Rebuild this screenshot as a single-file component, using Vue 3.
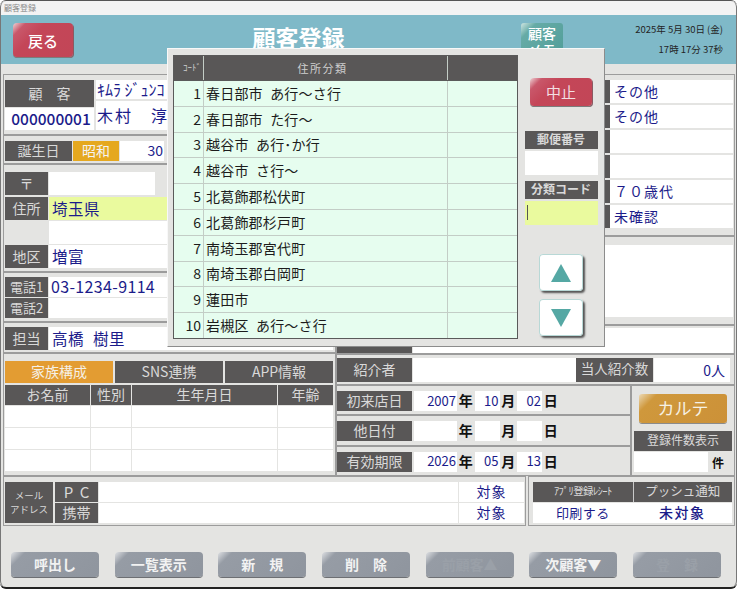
<script setup>
const groups = [
  { l: '家族構成', on: true },
  { l: 'SNS連携', on: false },
  { l: 'APP情報', on: false }
]
const famRows = [1, 2, 3]
const rightRows = ['その他', 'その他', '', '', '７０歳代', '未確認']
const dates = [
  { l: '初来店日', y: '2007', m: '10', d: '02' },
  { l: '他日付', y: '', m: '', d: '' },
  { l: '有効期限', y: '2026', m: '05', d: '13' }
]
const footer = [
  { l: '呼出し' },
  { l: '一覧表示' },
  { l: '新　規' },
  { l: '削　除' },
  { l: '前顧客▲', off: true },
  { l: '次顧客▼' },
  { l: '登　録', off: true }
]
const areas = [
  '春日部市 あ行～さ行',
  '春日部市 た行～',
  '越谷市 あ行･か行',
  '越谷市 さ行～',
  '北葛飾郡松伏町',
  '北葛飾郡杉戸町',
  '南埼玉郡宮代町',
  '南埼玉郡白岡町',
  '蓮田市',
  '岩槻区 あ行～さ行'
]
</script>

<template>
  <div class="window">
    <div class="titlebar">顧客登録</div>
    <header class="header">
      <button class="btn-red back">戻る</button>
      <h1 class="title">顧客登録</h1>
      <button class="memo">顧客<br />メモ</button>
      <div class="clock">
        <div>2025年 5月 30日 (金)</div>
        <div>17時 17分 37秒</div>
      </div>
    </header>

    <div class="gap-band"></div>

    <main class="upper">
      <div class="col-left">
        <section class="panel p-customer">
          <div class="cust-left">
            <div class="label cust-label">顧　客</div>
            <div class="value cust-id">000000001</div>
          </div>
          <div class="cust-right">
            <div class="value cust-kana">ｷﾑﾗ ｼﾞｭﾝｺ</div>
            <div class="value cust-name">木村　淳子</div>
          </div>
        </section>

        <section class="panel p-birth">
          <div class="label birth-label">誕生日</div>
          <div class="era">昭和</div>
          <div class="value birth-year">30</div>
        </section>

        <section class="panel p-address">
          <div class="addr-line r1">
            <div class="label addr-label">〒</div>
            <div class="value zip"></div>
          </div>
          <div class="addr-line r2">
            <div class="label addr-label">住所</div>
            <div class="value yellow addr-text">埼玉県</div>
          </div>
          <div class="addr-line r3">
            <div class="addr-spacer"></div>
            <div class="value addr-text"></div>
          </div>
          <div class="addr-line r4">
            <div class="label addr-label">地区</div>
            <div class="value addr-text">増富</div>
          </div>
        </section>

        <section class="panel p-phone">
          <div class="phone-line">
            <div class="label addr-label tel">電話1</div>
            <div class="value tel-no">03-1234-9114</div>
          </div>
          <div class="phone-line">
            <div class="label addr-label tel">電話2</div>
            <div class="value tel-no"></div>
          </div>
        </section>

        <section class="panel p-staff">
          <div class="label addr-label">担当</div>
          <div class="value addr-text staff-name">高橋 樹里</div>
          <div class="staff-btn"></div>
        </section>

        <section class="panel p-family">
          <nav class="tabs">
            <div v-for="g in groups" :key="g.l" class="tab" :class="{ on: g.on }">{{ g.l }}</div>
          </nav>
          <div class="fam-grid">
            <div class="label fam-h">お名前</div>
            <div class="label fam-h">性別</div>
            <div class="label fam-h">生年月日</div>
            <div class="label fam-h">年齢</div>
            <template v-for="r in famRows" :key="r">
              <div class="value"></div>
              <div class="value"></div>
              <div class="value"></div>
              <div class="value"></div>
            </template>
          </div>
        </section>
      </div>

      <div class="col-right">
        <section class="panel p-right-top">
          <div v-for="(v, i) in rightRows" :key="i" class="rt-line">
            <div class="label rt-label"></div>
            <div class="value rt-val">{{ v }}</div>
          </div>
        </section>
        <section class="panel p-note">
          <div class="value note-box"></div>
        </section>
        <section class="panel p-line">
          <div class="label line-label"></div>
          <div class="value line-val"></div>
        </section>
        <section class="panel p-intro">
          <div class="label intro-label">紹介者</div>
          <div class="value intro-val"></div>
          <div class="label intro-count">当人紹介数</div>
          <div class="value intro-num">0人</div>
        </section>
        <div class="dates-wrap">
          <div class="dates">
            <section v-for="d in dates" :key="d.l" class="panel date-line">
              <div class="label date-label">{{ d.l }}</div>
              <div class="value date-y">{{ d.y }}</div>
              <b class="unit">年</b>
              <div class="value date-md">{{ d.m }}</div>
              <b class="unit">月</b>
              <div class="value date-md">{{ d.d }}</div>
              <b class="unit">日</b>
            </section>
          </div>
          <section class="panel karte-box">
            <button class="karte">カルテ</button>
            <div class="label count-label">登録件数表示</div>
            <div class="count-line">
              <div class="value count-val"></div>
              <b class="count-unit">件</b>
            </div>
          </section>
        </div>
      </div>
    </main>

    <div class="mail-band">
      <section class="panel p-mail">
        <div class="label mail-head">メール<br />アドレス</div>
        <div class="mail-rows">
          <div class="mail-line">
            <div class="label mail-type pc">P C</div>
            <div class="value mail-addr"></div>
            <div class="value mail-flag">対象</div>
          </div>
          <div class="mail-line">
            <div class="label mail-type">携帯</div>
            <div class="value mail-addr"></div>
            <div class="value mail-flag">対象</div>
          </div>
        </div>
      </section>
      <section class="panel p-app">
        <div class="label app-h app-h1">ｱﾌﾟﾘ登録ﾚｼｰﾄ</div>
        <div class="label app-h">プッシュ通知</div>
        <div class="value app-v small">印刷する</div>
        <div class="value app-v">未対象</div>
      </section>
    </div>

    <footer class="footer">
      <button v-for="f in footer" :key="f.l" class="foot-btn" :class="{ off: f.off }">{{ f.l }}</button>
    </footer>

    <div class="modal">
      <div class="list">
        <div class="list-row list-head">
          <div class="c-code">ｺｰﾄﾞ</div>
          <div class="c-name">住所分類</div>
          <div class="c-blank"></div>
        </div>
        <div v-for="(a, i) in areas" :key="a" class="list-row">
          <div class="c-code">{{ i + 1 }}</div>
          <div class="c-name">{{ a }}</div>
          <div class="c-blank"></div>
        </div>
      </div>
      <aside class="side">
        <button class="btn-red stop">中止</button>
        <div class="label side-label first">郵便番号</div>
        <div class="value side-val"></div>
        <div class="label side-label">分類コード</div>
        <div class="value yellow side-val cursor"><span class="caret"></span></div>
        <button class="arrow up" aria-label="up"><svg width="20" height="18" viewBox="0 0 20 18"><path d="M10 0 L20 18 L0 18 Z" fill="#55a8a4" /></svg></button>
        <button class="arrow down" aria-label="down"><svg width="20" height="18" viewBox="0 0 20 18"><path d="M0 0 L20 0 L10 18 Z" fill="#55a8a4" /></svg></button>
      </aside>
    </div>
  </div>
</template>

<style>
html, body { margin: 0; background: #fff; }
</style>

<style scoped>
* { box-sizing: border-box; }
.window {
  position: relative;
  width: 737px;
  height: 589px;
  overflow: hidden;
  display: flex;
  flex-direction: column;
  background: #e4e4e2;
  border-top: 1px solid #555;
  border-bottom: 2px solid #222;
  border-radius: 6px;
  font-family: "Noto Sans CJK JP", "Noto Sans", sans-serif;
  color: #1b1b8a;
}
.window::after {
  content: "";
  position: absolute;
  inset: 0;
  border-left: 1px solid #777;
  border-right: 1px solid #777;
  border-radius: 6px;
  pointer-events: none;
}
.titlebar {
  height: 14px;
  flex: none;
  background: #f3f3f3;
  color: #8a8a8a;
  font-size: 8px;
  line-height: 14px;
  padding-left: 4px;
}
.header {
  height: 49px;
  flex: none;
  background: #7fb9c8;
  display: flex;
  align-items: flex-start;
  padding: 8px 14px 0 13px;
  position: relative;
}
.back { width: 60px; height: 34px; font-size: 15px; padding-bottom: 2px; }
.btn-red {
  border: 0;
  border-radius: 4px;
  background: linear-gradient(135deg, #efd3d6 0, #c9576a 14%, #c44658 35%, #c24657 100%);
  box-shadow: 0 1px 0 #7c7c7c, 1px 1px 0 #8a5a62;
  color: #fff;
  font-family: inherit;
  font-weight: 500;
  padding: 0;
}
.title {
  margin: -1px 0 0;
  width: 448px;
  padding-left: 3px;
  text-align: center;
  color: #fff;
  font-size: 23px;
  line-height: 30px;
  font-weight: 700;
}
.memo {
  width: 42px;
  height: 36px;
  border: 0;
  border-radius: 3px;
  background: linear-gradient(135deg, #cfe6e2 0, #66aba6 20%, #4f9d98 100%);
  color: #fff;
  font-family: inherit;
  font-size: 14px;
  line-height: 16px;
  font-weight: 500;
  padding: 0;
}
.clock {
  margin-left: auto;
  margin-top: -3px;
  color: #252525;
  font-size: 9.5px;
  text-align: right;
  line-height: 19.5px;
  display: flex;
  flex-direction: column;
}
.gap-band { height: 10px; flex: none; }

.panel { border: 1px solid #9c9c9c; }
.label {
  background: #595757;
  color: #d9d9d9;
  display: flex;
  align-items: center;
  justify-content: center;
  font-size: 14px;
  line-height: 1;
  padding-bottom: 2px;
}
.value {
  background: #fff;
  color: #1b1b8a;
  font-size: 14px;
  display: flex;
  align-items: center;
  padding-bottom: 2px;
}
.yellow { background: #eafa9e; }

.upper {
  height: 402px;
  flex: none;
  display: flex;
  padding: 0 2px 0 3px;
}
.col-left { width: 333px; flex: none; display: flex; flex-direction: column; }
.col-right { flex: 1; min-width: 0; display: flex; flex-direction: column; }

.p-customer { height: 61px; display: flex; padding: 5px 2px 0 1px; gap: 2px; }
.cust-left { width: 89px; display: flex; flex-direction: column; gap: 1px; }
.cust-label { height: 27px; }
.cust-id { height: 22px; justify-content: center; padding-left: 3px; font-size: 15.5px; font-weight: 500; }
.cust-right { flex: 1; display: flex; flex-direction: column; gap: 2px; }
.cust-kana { height: 19px; padding-left: 1px; font-size: 16px; }
.cust-name { height: 29px; padding-left: 1px; font-size: 16px; letter-spacing: 2px; }

.p-birth { height: 29px; display: flex; padding: 5px 2px 0 1px; gap: 1px; }
.birth-label { width: 67px; height: 20px; font-size: 14px; }
.era { width: 46px; height: 20px; background: #e5a81f; color: #f4f4f4; font-size: 14px; display: flex; align-items: center; justify-content: center; padding-bottom: 2px; }
.birth-year { width: 44px; height: 20px; justify-content: flex-end; padding-right: 1px; font-size: 14px; }

.p-address { height: 108px; padding: 7px 2px 0 1px; display: flex; flex-direction: column; gap: 1px; }
.addr-line { display: flex; gap: 1px; height: 23px; flex: none; }
.r2 { margin-top: 1px; }
.addr-label { width: 43px; height: 100%; flex: none; }
.zip { width: 106px; }
.addr-spacer { width: 43px; flex: none; }
.addr-text { flex: 1; font-size: 15.5px; letter-spacing: 0.5px; padding-left: 3px; word-spacing: 5px; }

.p-phone { height: 50px; padding: 4px 2px 0 1px; display: flex; flex-direction: column; gap: 1px; }
.phone-line { display: flex; gap: 1px; height: 20px; }
.tel { font-size: 13px; }
.tel-no { flex: 1; font-size: 16px; letter-spacing: 0.35px; padding-left: 2px; }

.p-staff { height: 31px; position: relative; padding: 4px 2px 0 1px; display: flex; gap: 1px; }
.p-staff .addr-label { height: 23px; }
.staff-name { height: 23px; }
.staff-btn {
  position: absolute;
  left: 243px;
  top: 16px;
  width: 82px;
  height: 7px;
  background: #6b76b0;
  border-radius: 0 0 4px 4px;
}

.p-family { height: 123px; padding: 7px 2px 0 1px; }
.tabs { display: flex; gap: 2px; height: 22px; }
.tab {
  flex: 1;
  background: #595757;
  color: #d9d9d9;
  font-size: 14px;
  display: flex;
  align-items: center;
  justify-content: center;
  padding-bottom: 2px;
}
.tab.on { background: #e39c32; color: #f5f0e6; }
.fam-grid {
  margin-top: 2px;
  display: grid;
  grid-template-columns: 85px 40px 145px 1fr;
  grid-template-rows: 20px 21px 21px 21px;
  gap: 1px;
}
.fam-h { font-size: 14px; }

.p-right-top { height: 162px; padding: 5px 1px 0 0; display: flex; flex-direction: column; gap: 2px; }
.rt-line { display: flex; justify-content: flex-end; height: 23px; }
.rt-label { width: 80px; }
.rt-val { width: 123px; padding-left: 4px; font-size: 14px; letter-spacing: 1px; }
.p-note { height: 89px; padding: 8px 1px 0 0; display: flex; }
.note-box { flex: 1; height: 72px; }
.p-line { height: 29px; display: flex; padding: 2px 1px 0 0; }
.line-label { width: 75px; height: 25px; }
.line-val { flex: 1; height: 25px; margin-left: 1px; }
.p-intro { height: 31px; padding: 3px 4px 0 0; display: flex; }
.p-intro > div { height: 24px; }
.intro-label { width: 75px; }
.intro-val { width: 163px; margin-left: 1px; }
.intro-count { width: 77px; font-size: 13.5px; }
.intro-num { flex: 1; margin-left: 1px; justify-content: flex-end; padding-right: 5px; padding-bottom: 0; font-size: 14px; }

.dates-wrap { display: flex; height: 91px; }
.dates { width: 295px; flex: none; display: flex; flex-direction: column; }
.date-line { height: 30.33px; padding-top: 5px; display: flex; font-size: 13px; }
.date-line > div { height: 20px; }
.date-label { width: 75px; font-size: 14px; }
.date-y { width: 43px; margin-left: 2px; justify-content: flex-end; padding-right: 1px; font-size: 13px; }
.date-md { width: 25px; justify-content: flex-end; padding-right: 1px; font-size: 13px; }
.unit { width: 17.5px; text-align: center; color: #111; font-size: 14px; line-height: 19px; font-weight: 700; }
.karte-box { flex: 1; padding: 8px 2px 0 2px; display: flex; flex-direction: column; align-items: stretch; }
.karte {
  width: 88px;
  height: 29px;
  margin-left: 5px;
  border: 0;
  border-radius: 3px;
  background: linear-gradient(135deg, #ecd9b5 0, #cf983c 16%, #cc9138 100%);
  box-shadow: 0 1px 0 #8b8b8b;
  color: #f6f1e4;
  font-family: inherit;
  font-size: 17px;
  padding: 0 0 2px;
}
.count-label { height: 20px; margin-top: 8px; font-size: 12px; }
.count-line { display: flex; margin-top: 1px; height: 20px; }
.count-val { width: 74px; }
.count-unit { margin-left: 4px; color: #111; font-size: 12px; line-height: 22px; }

.mail-band { height: 50px; flex: none; display: flex; padding: 0 2px 0 3px; gap: 2px; }
.p-mail { width: 523px; flex: none; display: flex; padding: 5px 1px 0 1px; gap: 2px; }
.mail-head { width: 48px; height: 41px; font-size: 9.5px; line-height: 14px; text-align: center; flex-direction: column; }
.mail-rows { flex: 1; display: flex; flex-direction: column; gap: 1px; }
.mail-line { display: flex; gap: 1px; height: 20px; }
.mail-type { width: 43px; font-size: 14px; }
.mail-type.pc { font-size: 15px; word-spacing: 3px; }
.mail-addr { flex: 1; }
.mail-flag { width: 65px; justify-content: center; font-size: 14px; letter-spacing: 1px; }
.p-app {
  flex: 1;
  padding: 5px 2px 0 4px;
  display: grid;
  grid-template-columns: 1fr 1fr;
  grid-template-rows: 20px 20px;
  gap: 1px 0;
}
.app-h { font-size: 12.5px; }
.app-h + .app-h { border-left: 1px solid #c9c9c9; }
.app-h1 { font-size: 10.5px; letter-spacing: -0.6px; }
.app-v { justify-content: center; font-size: 14px; letter-spacing: 1.5px; font-weight: 500; }
.app-v.small { font-size: 13px; letter-spacing: 0.4px; font-weight: 400; }

.footer {
  flex: 1;
  display: flex;
  align-items: flex-start;
  padding: 26px 0 0 11px;
  gap: 15.67px;
}
.foot-btn {
  width: 88px;
  height: 25px;
  flex: none;
  border: 0;
  border-radius: 4px;
  background: linear-gradient(135deg, #dfe1e4 0, #969ca5 13%, #8f959e 100%);
  box-shadow: 0 1px 0 #6d6f73;
  color: #f2f2f2;
  font-family: inherit;
  font-size: 14px;
  font-weight: 700;
  padding: 0 0 2px;
  white-space: pre;
}
.foot-btn.off { color: #9aa0a8; }

.modal {
  position: absolute;
  left: 167px;
  top: 47px;
  width: 438px;
  height: 299px;
  background: #e4e4e2;
  border-top: 1px solid #f8f8f8;
  border-left: 1px solid #f8f8f8;
  border-right: 1px solid #8c8c8c;
  border-bottom: 1px solid #8c8c8c;
  display: flex;
  padding: 6px 0 0 5px;
}
.list {
  width: 345px;
  height: 284px;
  flex: none;
  border: 1px solid #5a5a5a;
  background: #e6fdef;
  display: flex;
  flex-direction: column;
}
.list-row {
  flex: 1;
  display: flex;
  border-bottom: 1px solid #c3cdc6;
  font-size: 14px;
  color: #1c1c1c;
  align-items: stretch;
}
.list-row:last-child { border-bottom: 0; }
.list-head {
  flex: none;
  height: 25px;
  background: #595757;
  color: #cfcfcf;
  font-size: 11px;
  border-bottom: 1px solid #5a5a5a;
}
.c-code {
  width: 30px;
  flex: none;
  border-right: 1px solid #c3cdc6;
  display: flex;
  align-items: center;
  justify-content: flex-end;
  padding-right: 2px;
  padding-bottom: 1px;
}
.list-head .c-code { font-size: 9px; }
.c-name {
  flex: 1;
  padding-left: 2px;
  padding-bottom: 1px;
  display: flex;
  align-items: center;
  letter-spacing: 0.2px;
  word-spacing: 4px;
  white-space: pre;
}
.list-head .c-name { justify-content: center; padding-right: 8px; letter-spacing: 1.5px; }
.c-blank { width: 70px; flex: none; border-left: 1px solid #c3cdc6; }
.side {
  flex: 1;
  display: flex;
  flex-direction: column;
  align-items: center;
  padding-top: 23px;
}
.stop {
  width: 62px;
  height: 28px;
  font-size: 15px;
  color: #f2dfe2;
  font-weight: 400;
  padding-bottom: 2px;
}
.side-label { width: 73px; height: 18px; font-size: 12px; font-weight: 700; margin-top: 6px; }
.side-label.first { margin-top: 25px; }
.side-val { width: 73px; height: 24px; margin-top: 2px; }
.cursor { position: relative; }
.caret { width: 1px; height: 15px; background: #555; margin-left: 2px; }
.arrow {
  width: 44px;
  height: 37px;
  border: 0;
  padding: 0;
  border-radius: 4px;
  background: #fff;
  box-shadow: inset 0 0 0 1px #b8d8d6, 2px 2px 2px #555;
  display: flex;
  align-items: center;
  justify-content: center;
}
.up { margin-top: 29px; }
.down { margin-top: 8px; }
</style>
